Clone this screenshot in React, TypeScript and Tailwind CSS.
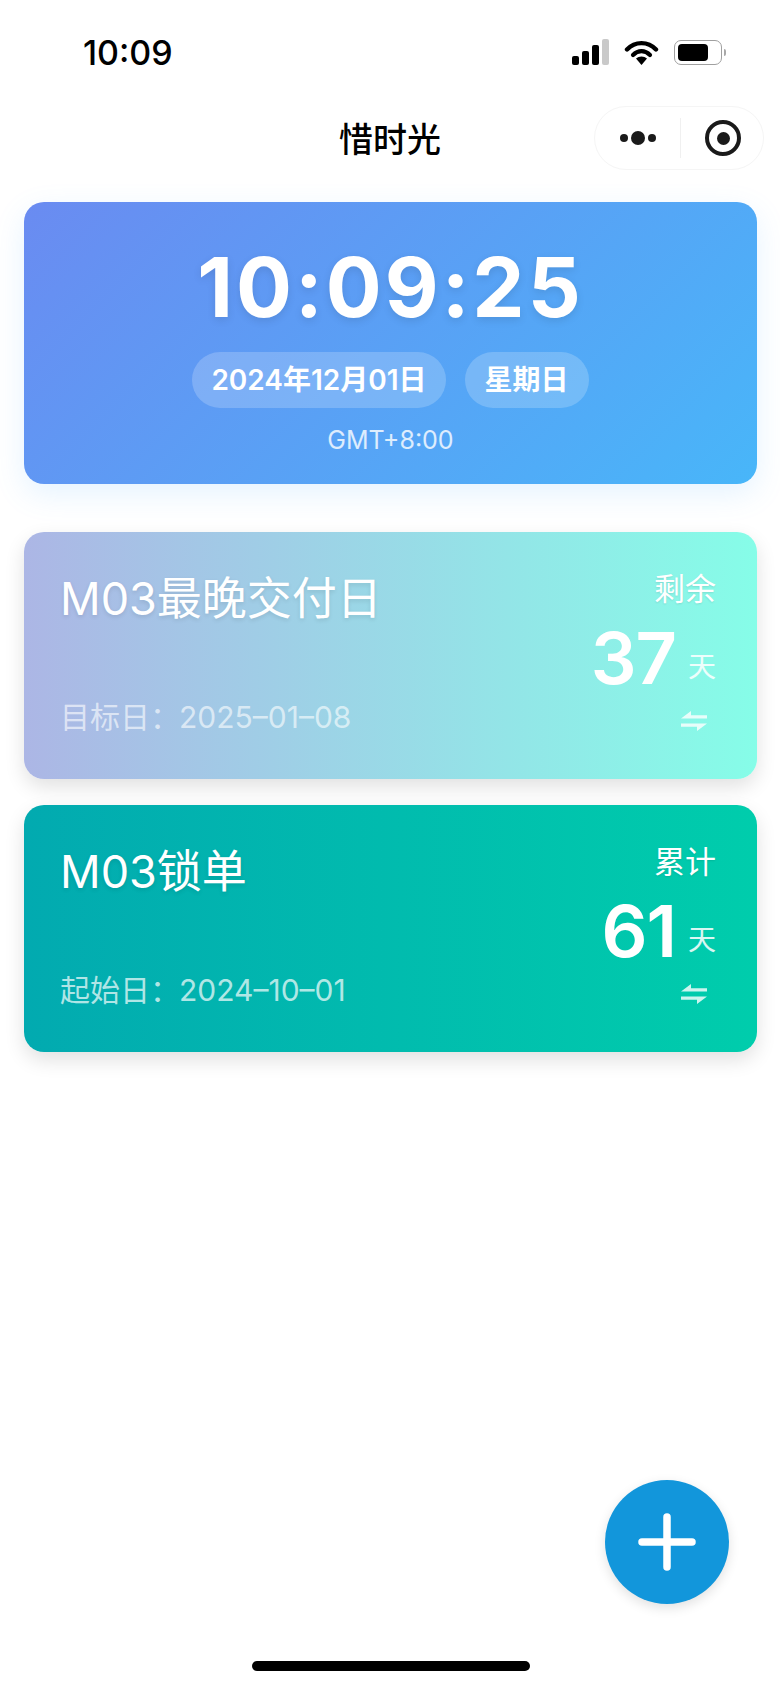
import React from "react";

const sans = "font-['Inter','Noto_Sans_CJK_SC',sans-serif]";

const SwapIcon = () => (
  <svg width="28" height="22" viewBox="0 0 28 22" fill="none">
    <path d="M1 8.5 L11 1 V5.2 H27 V8.5 Z" fill="currentColor" />
    <path d="M27 13.5 L17 21 V16.8 H1 V13.5 Z" fill="currentColor" />
  </svg>
);

const StatusIcons = () => (
  <div className="flex items-center gap-[15px]">
    <div className="flex items-end gap-[3px]">
      <div className="w-[7px] h-[9px] rounded-[2px] bg-black" />
      <div className="w-[7px] h-[14px] rounded-[2px] bg-black" />
      <div className="w-[7px] h-[20px] rounded-[2px] bg-black" />
      <div className="w-[7px] h-[26px] rounded-[2px] bg-[#c9c9c9]" />
    </div>
    <svg width="35" height="25" viewBox="0 0 34 25">
      <path d="M17 25 L11.5 18.5 C14.5 15.8 19.5 15.8 22.5 18.5 Z" fill="black" />
      <path d="M2.5 9.5 C10.5 1 23.5 1 31.5 9.5" fill="none" stroke="black" strokeWidth="4.4" strokeLinecap="round" />
      <path d="M8.5 15 C13.5 9.8 20.5 9.8 25.5 15" fill="none" stroke="black" strokeWidth="4.2" strokeLinecap="round" />
    </svg>
    <div className="flex items-center gap-[2px]">
      <div className="w-[48px] h-[25px] rounded-[7px] border-[1.5px] border-[#a0a0a0] p-[3px]">
        <div className="w-[30px] h-full rounded-[4px] bg-black" />
      </div>
      <div className="w-[2px] h-[7px] rounded-r-full bg-[#a8a8a8]" />
    </div>
  </div>
);

interface CountCardProps {
  title: string;
  dateLabel: string;
  date: string;
  tag: string;
  days: number;
  gradient: string;
  dateColor: string;
}

const CountCard: React.FC<CountCardProps> = ({ title, dateLabel, date, tag, days, gradient, dateColor }) => (
  <div className={`h-[247px] rounded-[20px] pl-[36px] pr-[41px] flex justify-between shadow-[0_8px_20px_rgba(0,0,0,0.12)] text-white ${gradient}`}>
    <div className="flex flex-col pt-[33px]">
      <div className="text-[45px] leading-[68px] [text-shadow:0_2px_4px_rgba(0,0,0,0.1)]">{title}</div>
      <div className={`mt-[64px] text-[30px] leading-[40px] ${dateColor}`}>
        <span>{dateLabel}</span>
        <span className="ml-[-1px]">{date}</span>
      </div>
    </div>
    <div className="flex flex-col items-end pt-[35px]">
      <div className="text-[31px] leading-[44px] [text-shadow:0_1px_2px_rgba(0,0,0,0.1)]">{tag}</div>
      <div className="flex items-end mt-[9px] h-[76px]">
        <span className="text-[72px] leading-[76px] font-semibold tracking-[-1px]">{days}</span>
        <span className="text-[28px] leading-[36px] ml-[12px] mb-[11px] text-white/85">天</span>
      </div>
      <div className="mt-[14px] mr-[8px] text-white/80">
        <SwapIcon />
      </div>
    </div>
  </div>
);

export default function App() {
  return (
    <div className={`relative w-[780px] h-[1688px] bg-white overflow-hidden ${sans}`}>
      <div className="h-[106px] pt-[31px] pl-[83px] pr-[54px] flex justify-between items-start">
        <div className="text-[34px] leading-[44px] font-medium text-black">10:09</div>
        <div className="pt-[8px]">
          <StatusIcons />
        </div>
      </div>

      <div className="relative h-[64px] flex items-center justify-center">
        <div className="text-[34px] leading-[50px] font-medium text-black pt-[4px]">惜时光</div>
        <div className="absolute right-[16px] top-0 w-[170px] h-[64px] rounded-full border border-[#f5f5f5] flex items-center">
          <div className="w-[85px] flex justify-center items-center gap-[3px]">
            <div className="w-[8px] h-[8px] rounded-full bg-[#1a1a1a]" />
            <div className="w-[14px] h-[14px] rounded-full bg-[#1a1a1a]" />
            <div className="w-[8px] h-[8px] rounded-full bg-[#1a1a1a]" />
          </div>
          <div className="w-px h-[40px] bg-[#f0f0f0]" />
          <div className="flex-1 flex justify-center pl-[2px]">
            <div className="w-[36px] h-[36px] rounded-full border-[4px] border-[#1a1a1a] flex items-center justify-center">
              <div className="w-[13px] h-[13px] rounded-full bg-[#1a1a1a]" />
            </div>
          </div>
        </div>
      </div>

      <div className="pl-[24px] pr-[23px] pt-[32px]">
        <div className="h-[282px] rounded-[20px] bg-[linear-gradient(135deg,#6a8bf1,#48b6f9)] shadow-[0_10px_30px_rgba(79,172,254,0.15)] flex flex-col items-center text-white">
          <div className="mt-[37px] text-[83px] leading-[96px] font-bold tracking-[3px] [text-shadow:0_3px_8px_rgba(0,0,0,0.1)]">10:09:25</div>
          <div className="mt-[17px] flex gap-[19px]">
            <div className="h-[56px] px-[19px] rounded-full bg-white/20 flex items-center text-[28px] font-semibold">2024年12月01日</div>
            <div className="h-[56px] px-[20px] rounded-full bg-white/20 flex items-center text-[28px] font-semibold">星期日</div>
          </div>
          <div className="mt-[14px] text-[25px] leading-[36px] text-white/80">GMT+8:00</div>
        </div>

        <div className="mt-[48px] flex flex-col gap-[26px]">
          <CountCard
            title="M03最晚交付日"
            dateLabel="目标日："
            date="2025–01–08"
            tag="剩余"
            days={37}
            gradient="bg-[linear-gradient(to_right,#acb6e5,#86fde8)]"
            dateColor="text-white/60"
          />
          <CountCard
            title="M03锁单"
            dateLabel="起始日："
            date="2024–10–01"
            tag="累计"
            days={61}
            gradient="bg-[linear-gradient(to_right,#02aab0,#00cdac)]"
            dateColor="text-white/70"
          />
        </div>
      </div>

      <button className="absolute left-[605px] top-[1480px] w-[124px] h-[124px] rounded-full bg-[#1296db] shadow-[0_4px_12px_rgba(0,0,0,0.12)] flex items-center justify-center">
        <svg width="58" height="58" viewBox="0 0 58 58">
          <path d="M29 4 V54 M4 29 H54" stroke="white" strokeWidth="7.5" strokeLinecap="round" />
        </svg>
      </button>

      <div className="absolute left-[252px] top-[1661px] w-[278px] h-[10px] rounded-full bg-black" />
    </div>
  );
}
